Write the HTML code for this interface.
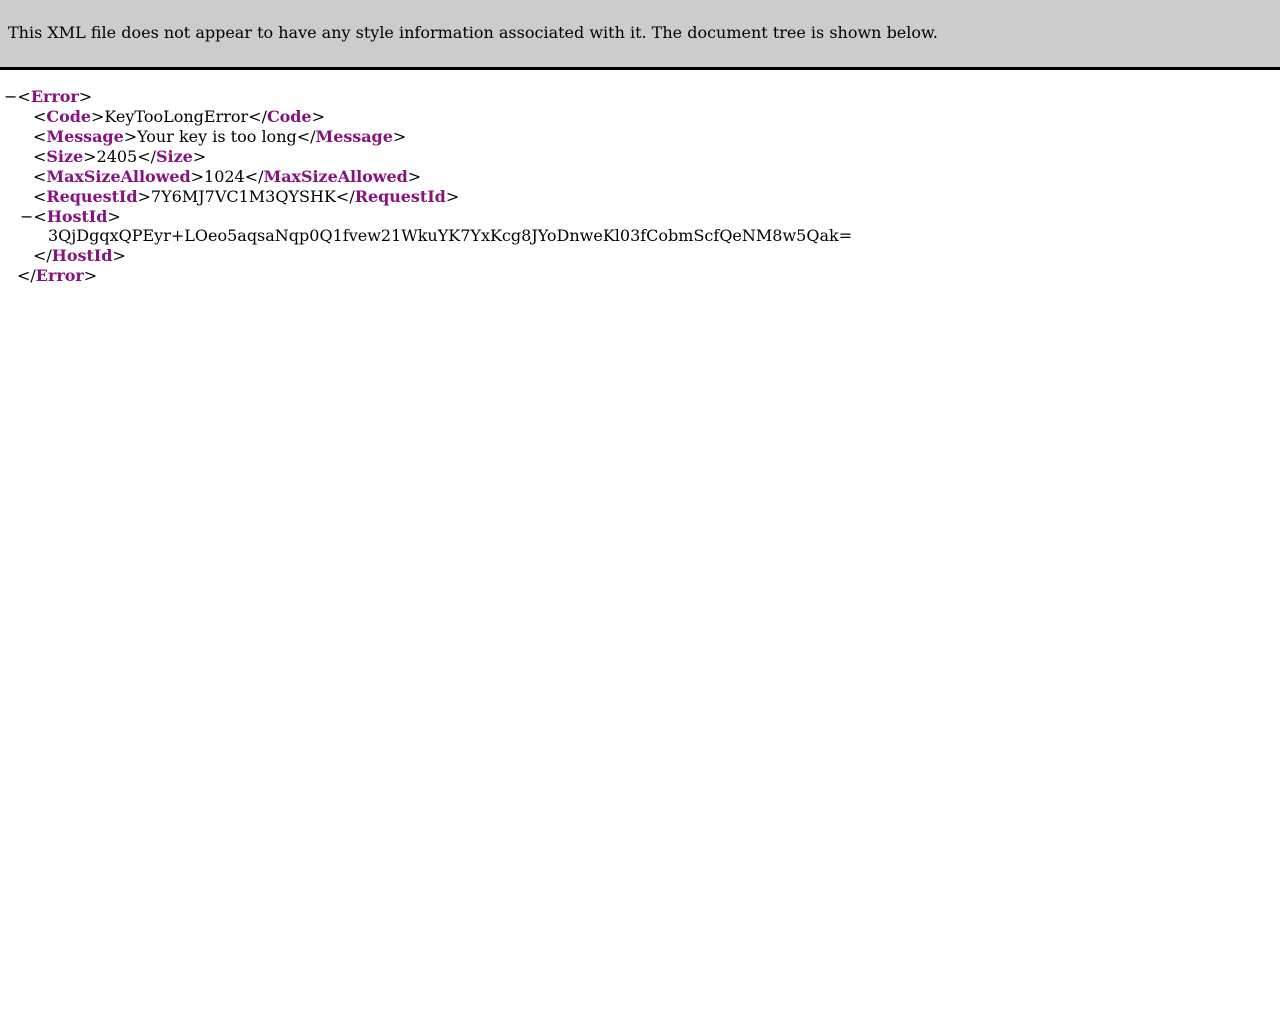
<!DOCTYPE html>
<html><head><meta charset="utf-8"><style>
body{margin:0;background:#fff;font-family:"DejaVu Serif",serif;font-size:16px;color:#000;}
.hdr{position:absolute;left:0;top:0;width:1280px;height:67px;background:#ccc;border-bottom:3px solid #000;}
.hdr div{position:absolute;left:8px;top:23px;line-height:20px;}
.l{position:absolute;line-height:20px;white-space:pre;}
b{color:#881280;letter-spacing:-0.05px;}
</style></head><body>
<div class="hdr"><div>This XML file does not appear to have any style information associated with it. The document tree is shown below.</div></div>
<div class="l" style="left:4px;top:87px">−&lt;<b>Error</b>&gt;</div>
<div class="l" style="left:33px;top:107px">&lt;<b>Code</b>&gt;KeyTooLongError&lt;/<b>Code</b>&gt;</div>
<div class="l" style="left:33px;top:127px">&lt;<b>Message</b>&gt;Your key is too long&lt;/<b>Message</b>&gt;</div>
<div class="l" style="left:33px;top:147px">&lt;<b>Size</b>&gt;2405&lt;/<b>Size</b>&gt;</div>
<div class="l" style="left:33px;top:167px">&lt;<b>MaxSizeAllowed</b>&gt;1024&lt;/<b>MaxSizeAllowed</b>&gt;</div>
<div class="l" style="left:33px;top:187px">&lt;<b>RequestId</b>&gt;7Y6MJ7VC1M3QYSHK&lt;/<b>RequestId</b>&gt;</div>
<div class="l" style="left:20px;top:207px">−&lt;<b>HostId</b>&gt;</div>
<div class="l" style="left:48px;top:226px">3QjDgqxQPEyr+LOeo5aqsaNqp0Q1fvew21WkuYK7YxKcg8JYoDnweKl03fCobmScfQeNM8w5Qak=</div>
<div class="l" style="left:33px;top:246px">&lt;/<b>HostId</b>&gt;</div>
<div class="l" style="left:17px;top:266px">&lt;/<b>Error</b>&gt;</div>
</body></html>
